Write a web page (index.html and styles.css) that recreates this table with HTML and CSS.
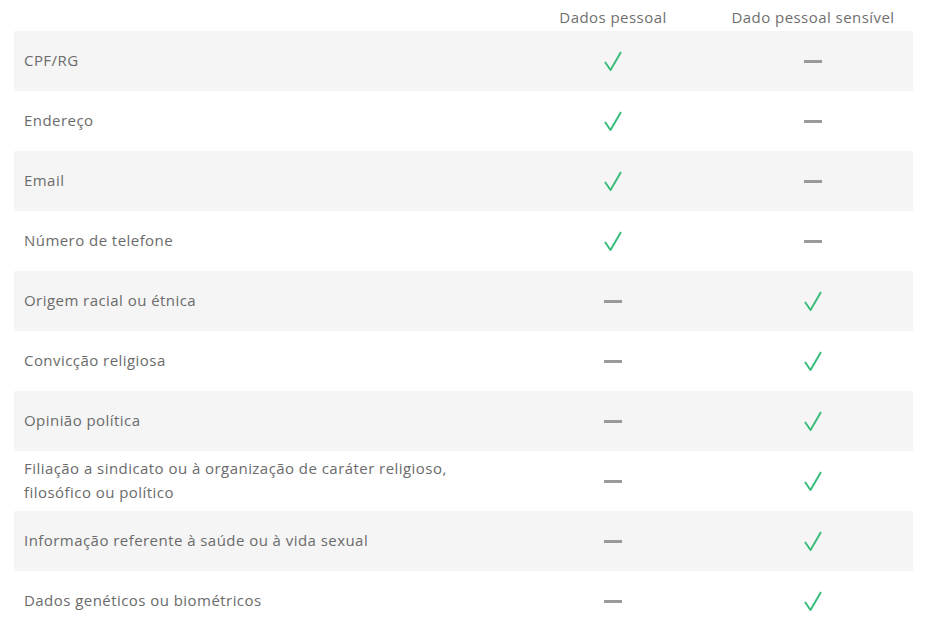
FILE: index.html
```html
<!DOCTYPE html>
<html lang="pt">
<head>
<meta charset="utf-8">
<link rel="stylesheet" href="styles.css">
</head>
<body>
<div class="wrap">
  <div class="grid head">
    <div class="label"></div>
    <div class="col">Dados pessoal</div>
    <div class="col">Dado pessoal sensível</div>
  </div>
  <div class="grid row"><div class="label">CPF/RG</div><div class="col"><span class="chk"></span></div><div class="col"><span class="dash"></span></div></div>
  <div class="grid row"><div class="label">Endereço</div><div class="col"><span class="chk"></span></div><div class="col"><span class="dash"></span></div></div>
  <div class="grid row"><div class="label">Email</div><div class="col"><span class="chk"></span></div><div class="col"><span class="dash"></span></div></div>
  <div class="grid row"><div class="label">Número de telefone</div><div class="col"><span class="chk"></span></div><div class="col"><span class="dash"></span></div></div>
  <div class="grid row"><div class="label">Origem racial ou étnica</div><div class="col"><span class="dash"></span></div><div class="col"><span class="chk"></span></div></div>
  <div class="grid row"><div class="label">Convicção religiosa</div><div class="col"><span class="dash"></span></div><div class="col"><span class="chk"></span></div></div>
  <div class="grid row"><div class="label">Opinião política</div><div class="col"><span class="dash"></span></div><div class="col"><span class="chk"></span></div></div>
  <div class="grid row"><div class="label">Filiação a sindicato ou à organização de caráter religioso, filosófico ou político</div><div class="col"><span class="dash"></span></div><div class="col"><span class="chk"></span></div></div>
  <div class="grid row"><div class="label">Informação referente à saúde ou à vida sexual</div><div class="col"><span class="dash"></span></div><div class="col"><span class="chk"></span></div></div>
  <div class="grid row"><div class="label">Dados genéticos ou biométricos</div><div class="col"><span class="dash"></span></div><div class="col"><span class="chk"></span></div></div>
</div>
</body>
</html>
```
FILE: styles.css
```css
body {
  margin: 0;
  background: #fff;
  font-family: "Open Sans", "Noto Sans", sans-serif;
  color: #6b6b6b;
}
.wrap {
  padding: 0 14px;
}
.grid {
  display: grid;
  grid-template-columns: 499px 200px 200px;
  align-items: center;
}
.head {
  height: 31px;
  font-size: 15px;
  letter-spacing: 0.45px;
  color: #6f6f6f;
}
.head .col {
  padding-top: 2px;
}
.row {
  height: 60px;
  font-size: 15px;
  letter-spacing: 0.45px;
  line-height: 24px;
}
.row:nth-child(even) {
  background: #f5f5f5;
}
.label {
  padding-left: 10px;
  padding-right: 40px;
  padding-bottom: 2px;
}
.col {
  display: flex;
  justify-content: center;
  align-items: center;
}
.chk {
  display: block;
  width: 18px;
  height: 20px;
  background: url("data:image/svg+xml;utf8,<svg xmlns='http://www.w3.org/2000/svg' width='18' height='20' viewBox='0 0 18 20'><path d='M1 11 L6.5 19 L17 1' fill='none' stroke='%233dbd7d' stroke-width='2' stroke-linejoin='round'/></svg>") no-repeat;
}
.dash {
  display: block;
  width: 18px;
  height: 3px;
  background: #9a9a9a;
}
```
